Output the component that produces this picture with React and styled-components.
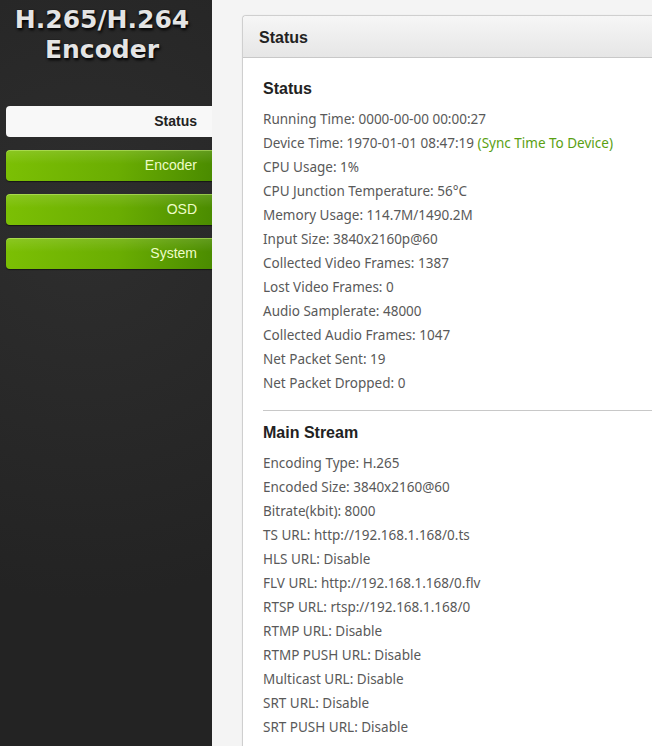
import React from "react";
import styled, { createGlobalStyle } from "styled-components";

const GlobalStyle = createGlobalStyle`
  html, body {
    margin: 0;
    padding: 0;
    height: 100%;
    overflow: hidden;
  }
  body {
    font-family: "Noto Sans", "Liberation Sans", sans-serif;
    background: #f4f4f4;
  }
`;

const statusRows = [
  ["Running Time", "0000-00-00 00:00:27"],
  ["Device Time", "1970-01-01 08:47:19", "(Sync Time To Device)"],
  ["CPU Usage", "1%"],
  ["CPU Junction Temperature", "56°C"],
  ["Memory Usage", "114.7M/1490.2M"],
  ["Input Size", "3840x2160p@60"],
  ["Collected Video Frames", "1387"],
  ["Lost Video Frames", "0"],
  ["Audio Samplerate", "48000"],
  ["Collected Audio Frames", "1047"],
  ["Net Packet Sent", "19"],
  ["Net Packet Dropped", "0"],
];

const streamRows = [
  ["Encoding Type", "H.265"],
  ["Encoded Size", "3840x2160@60"],
  ["Bitrate(kbit)", "8000"],
  ["TS URL", "http://192.168.1.168/0.ts"],
  ["HLS URL", "Disable"],
  ["FLV URL", "http://192.168.1.168/0.flv"],
  ["RTSP URL", "rtsp://192.168.1.168/0"],
  ["RTMP URL", "Disable"],
  ["RTMP PUSH URL", "Disable"],
  ["Multicast URL", "Disable"],
  ["SRT URL", "Disable"],
  ["SRT PUSH URL", "Disable"],
];

const menu = ["Status", "Encoder", "OSD", "System"];

export default function App() {
  return (
    <Page>
      <GlobalStyle />
      <Sidebar>
        <Logo>
          H.265/H.264
          <br />
          Encoder
        </Logo>
        <Menu>
          {menu.map((m, i) => (
            <MenuItem key={m} $active={i === 0}>
              {m}
            </MenuItem>
          ))}
        </Menu>
      </Sidebar>

      <Main>
        <Panel>
          <PanelHeader>Status</PanelHeader>
          <PanelBody>
            <SectionTitle>Status</SectionTitle>
            {statusRows.map(([k, v, link]) => (
              <Row key={k}>
                {k}: {v}
                {link && <SyncLink> {link}</SyncLink>}
              </Row>
            ))}
            <Divider />
            <SectionTitle>Main Stream</SectionTitle>
            {streamRows.map(([k, v]) => (
              <Row key={k}>
                {k}: {v}
              </Row>
            ))}
          </PanelBody>
        </Panel>
      </Main>
    </Page>
  );
}

const Page = styled.div`
  display: flex;
  height: 746px;
  overflow: hidden;
`;

const Sidebar = styled.div`
  width: 212px;
  flex-shrink: 0;
  background: radial-gradient(circle at 40% 30%, #2e2e2e, #232323 70%);
  display: flex;
  flex-direction: column;
`;

const Logo = styled.div`
  height: 101px;
  padding-top: 5px;
  box-sizing: content-box;
  font-family: "DejaVu Sans", Verdana, sans-serif;
  font-weight: bold;
  font-size: 25px;
  line-height: 30px;
  text-align: center;
  padding-right: 8px;
  color: #e4e4e4;
  text-shadow: 1px 2px 3px #000, 0 0 1px #000;
`;

const Menu = styled.div`
  display: flex;
  flex-direction: column;
  gap: 13px;
  padding-left: 6px;
`;

const MenuItem = styled.div`
  height: 31px;
  line-height: 31px;
  border-radius: 4px 0 0 4px;
  text-align: right;
  padding-right: 15px;
  font-family: "Liberation Sans", Arial, sans-serif;
  font-size: 14px;
  font-weight: ${(p) => (p.$active ? "bold" : "normal")};
  color: ${(p) => (p.$active ? "#222" : "#eefcc8")};
  background: ${(p) =>
    p.$active
      ? "#f8f8f8"
      : "linear-gradient(180deg, rgba(255,255,255,0.12), rgba(255,255,255,0) 45%), linear-gradient(100deg, #7cc004 0%, #6aad02 55%, #4a8b00 100%)"};
  box-shadow: ${(p) =>
    p.$active ? "none" : "inset 0 1px 0 rgba(200,240,120,0.5), 0 1px 1px rgba(0,0,0,0.5)"};
`;

const Main = styled.div`
  flex: 1;
  min-width: 0;
  background: #f4f4f4;
  padding: 15px 0 0 30px;
`;

const Panel = styled.div`
  background: #fff;
  border: 1px solid #cfcfcf;
  border-right: none;
  border-radius: 4px 0 0 0;
  height: 100%;
  box-shadow: 0 0 2px rgba(0, 0, 0, 0.05);
`;

const PanelHeader = styled.div`
  height: 41px;
  line-height: 43px;
  padding-left: 16px;
  background: linear-gradient(180deg, #f6f6f6, #e6e6e6);
  border-bottom: 1px solid #c8c8c8;
  border-radius: 4px 0 0 0;
  font-family: "Liberation Sans", Arial, sans-serif;
  font-weight: bold;
  font-size: 16px;
  color: #222;
`;

const PanelBody = styled.div`
  padding: 19px 0 0 20px;
`;

const SectionTitle = styled.div`
  font-family: "Liberation Sans", Arial, sans-serif;
  font-weight: bold;
  font-size: 16px;
  line-height: 24px;
  color: #222;
  margin-bottom: 6px;
`;

const Row = styled.div`
  font-size: 13.5px;
  line-height: 24px;
  color: #595959;
  white-space: nowrap;
`;

const SyncLink = styled.span`
  color: #5aa012;
`;

const Divider = styled.div`
  height: 1px;
  background: #c8c8c8;
  margin: 15px 0 10px;
`;
